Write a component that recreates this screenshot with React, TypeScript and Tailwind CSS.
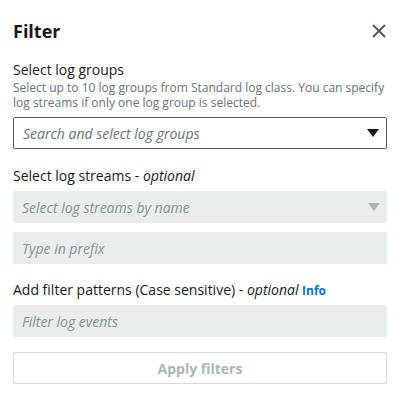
export default function App() {
  return (
    <div
      className="w-[400px] h-[398px] bg-white px-[13px] text-[#16191f]"
      style={{ fontFamily: '"Open Sans", "Noto Sans", sans-serif' }}
    >
      {/* header */}
      <div className="flex items-center justify-between pt-[17px] h-[45px]">
        <h2 className="text-[18px] font-bold leading-[24px]">Filter</h2>
        <svg width="14" height="14" viewBox="0 0 14 14" className="mr-[1px]">
          <path d="M1 1 L13 13 M13 1 L1 13" stroke="#545b64" strokeWidth="2" />
        </svg>
      </div>

      {/* log groups */}
      <div className="mt-[15px]">
        <div className="text-[14px] font-medium leading-[20px]">Select log groups</div>
        <p className="text-[12px] leading-[15px] text-[#687078]">
          Select up to 10 log groups from Standard log class. You can specify log streams if only one log
          group is selected.
        </p>
        <div className="mt-[7px] h-[32px] flex items-center justify-between border border-[#545b64] rounded-[2px] pl-[9px] pr-[7px]">
          <span className="text-[14px] italic text-[#687078]">Search and select log groups</span>
          <svg width="12" height="10" viewBox="0 0 12 10">
            <path d="M0 1 L12 1 L6 9 Z" fill="#16191f" />
          </svg>
        </div>
      </div>

      {/* log streams */}
      <div className="mt-[17px]">
        <div className="text-[14px] leading-[20px]">
          Select log streams - <i>optional</i>
        </div>
        <div className="mt-[5px] h-[32px] flex items-center justify-between bg-[#eaeded] rounded-[2px] pl-[9px] pr-[7px]">
          <span className="text-[14px] italic text-[#879596]">Select log streams by name</span>
          <svg width="12" height="10" viewBox="0 0 12 10">
            <path d="M0 1 L12 1 L6 9 Z" fill="#aab7b8" />
          </svg>
        </div>
        <div className="mt-[9px] h-[32px] flex items-center bg-[#eaeded] rounded-[2px] pl-[9px]">
          <span className="text-[14px] italic text-[#879596]">Type in prefix</span>
        </div>
      </div>

      {/* filter patterns */}
      <div className="mt-[16px]">
        <div className="text-[14px] leading-[20px]">
          Add filter patterns (Case sensitive) - <i>optional</i>{" "}
          <span className="text-[12px] font-bold text-[#0073bb]">Info</span>
        </div>
        <div className="mt-[4px] h-[32px] flex items-center bg-[#eaeded] rounded-[2px] pl-[9px]">
          <span className="text-[14px] italic text-[#879596]">Filter log events</span>
        </div>
      </div>

      <button className="mt-[15px] w-full h-[32px] border border-[#d5dbdb] rounded-[2px] text-[14px] font-bold text-[#aab7b8]">
        Apply filters
      </button>
    </div>
  );
}
